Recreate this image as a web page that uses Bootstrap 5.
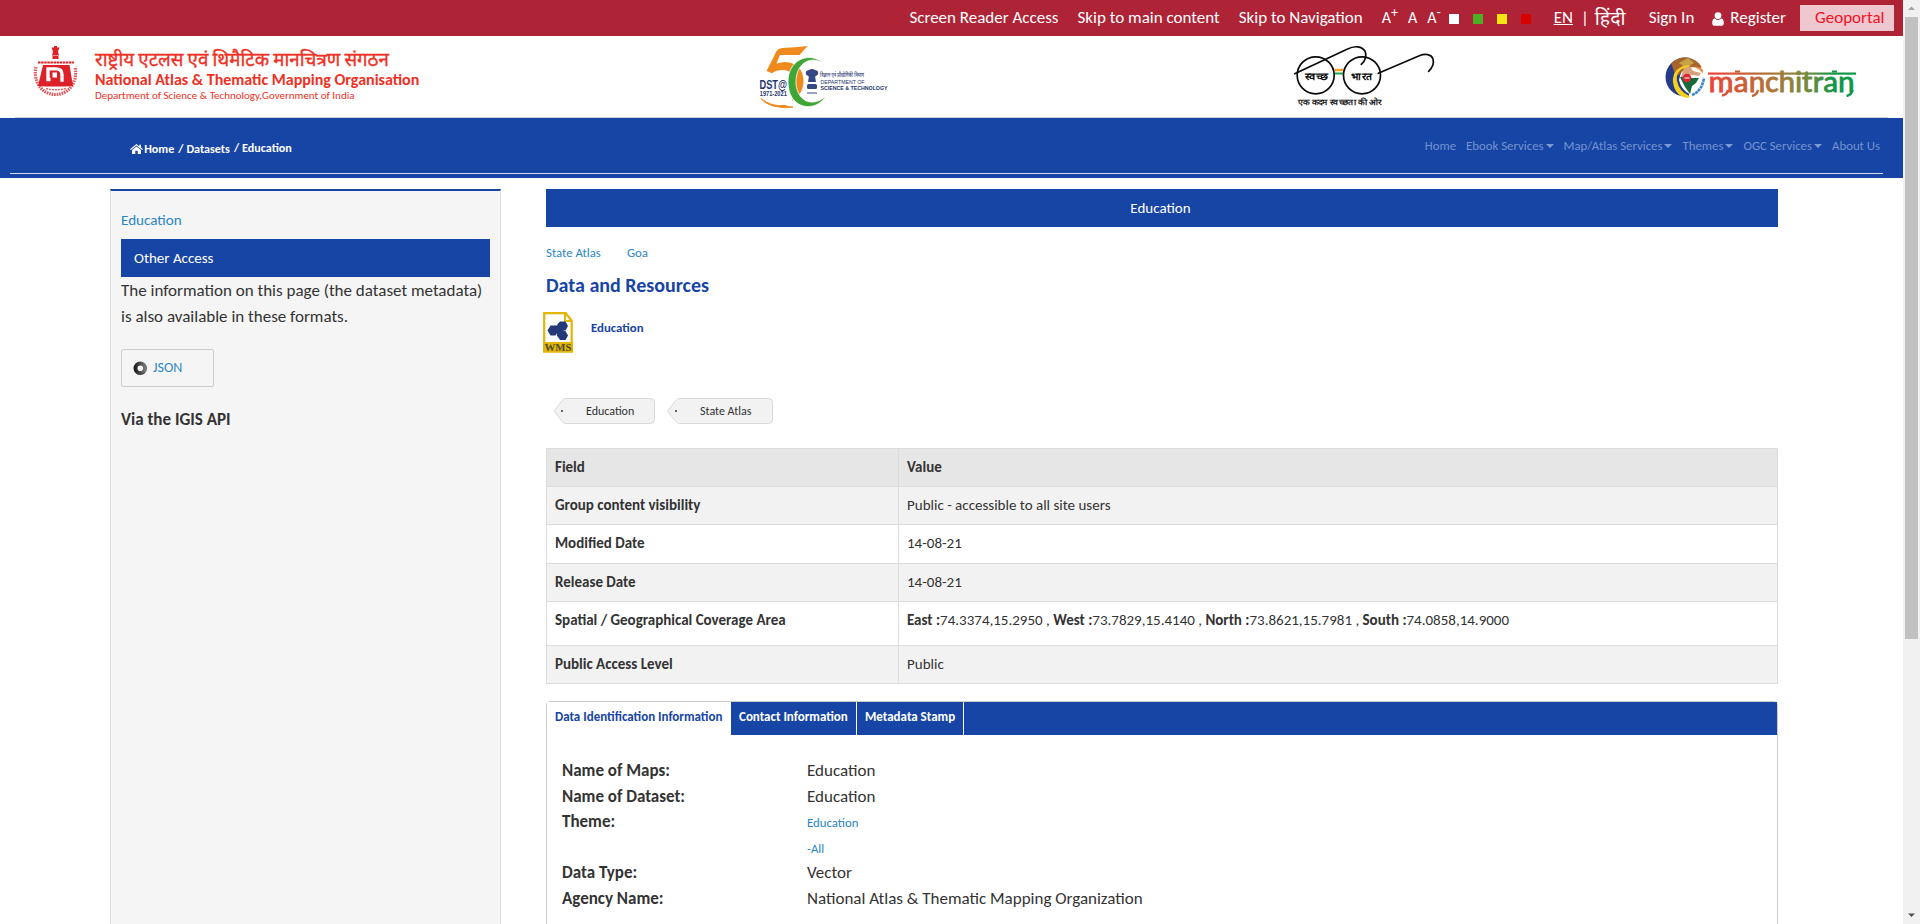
<!DOCTYPE html>
<html lang="en">
<head>
<meta charset="utf-8">
<title>Education | National Atlas &amp; Thematic Mapping Organisation</title>
<link rel="stylesheet" href="https://cdn.jsdelivr.net/npm/bootstrap@5.3.0/dist/css/bootstrap.min.css">
<style>
:root{--brand:#1745a5;--crimson:#ae2336;--sky:#2a85c7}
body{font-family:Carlito,Lato,"Noto Sans",sans-serif;color:#333;height:924px;overflow:hidden;background:#fff;font-size:17px;line-height:26px}
a{text-decoration:none}
.page-area{width:1903px;height:924px;overflow:hidden}
.top-bar{height:36px;background:var(--crimson);color:#fff;line-height:36px;padding-right:9px;white-space:nowrap}
.top-bar a{color:#fff}
.links a{margin-right:19px}
.sizes{font-size:16px;width:59px;margin-right:8px}
.sizes sup{font-size:14px;top:-6px;line-height:0}
.swatch{width:10px;height:10px;margin-right:14px;margin-top:2px}
.hindi{font-size:19.5px}
.geo{height:26px;width:94px;background:#efc7ce;line-height:26px;padding-left:15px}
.top-bar .geo{color:#f5101f}
.brand-row{height:82px;padding-left:32px}
.brand-row .rule{left:15px;right:15px;bottom:0;height:1px;background:#ccd3dc}
.org{width:661px;padding:14px 0 0 17px;color:#ee3124;white-space:nowrap}
.org-hi{font-size:18.7px;line-height:20px;-webkit-text-stroke:.35px #ee3124}
.org-en{font-size:16px;line-height:20px}
.org-dept{font-size:11px;line-height:12px}
.nav-band{height:60px;background:var(--brand);color:#fff;padding-top:10px;white-space:nowrap}
.nav-band .inner{height:46px;margin:0 20px 0 10px;border-bottom:1px solid #d5def0;padding-left:120px;padding-right:3px}
.crumbs{font-size:12.1px;font-weight:700;line-height:16px;padding-top:13px}
.crumbs a{color:#fff}
.menu{font-size:12.8px;line-height:16px;padding-top:10px}
.menu a{color:#7493d0;margin-left:10px}
.caret{display:inline-block;border:4px solid transparent;border-top-color:#7f9bd4;border-bottom:0;margin-left:2px;vertical-align:2px}
.side{width:391px;height:760px;margin-left:110px;background:#f5f5f5;border:1px solid #ddd;border-top:2px solid var(--brand);padding:16px 10px 0}
.side a,.content a{color:var(--sky)}
.side-link{font-size:15.100px;line-height:26px;height:32px}
.bar{height:38px;background:var(--brand);color:#fff;line-height:38px;font-size:15px}
.json-box{width:93px;height:38px;border:1px solid #ccc;border-radius:2px;margin-top:19px;padding-left:11px;font-size:14px}
.content{width:1232px;margin-left:45px}
.crumb-links{font-size:12.8px;line-height:20px;margin-top:16px}
.content h2{font-size:20px;line-height:26px;font-weight:700;color:var(--brand);margin:9px 0 0}
.resource{margin:14px 0 0 -3px;height:41px}
.resource a{font-size:12.8px;font-weight:700;color:var(--brand);margin-left:18px;line-height:32px}
.tags{margin:45px 0 0 8px;font-size:12px;line-height:26px;height:26px}
.content .tag-item{position:relative;height:26px;color:#333;padding-left:32px;white-space:nowrap}
.tag-item svg{position:absolute;left:0;top:0}
.tag-item span{position:relative}
.meta-table{font-size:15px;margin:24px 0 0;table-layout:fixed}
.meta-table>:not(caption)>*>*{padding:0 8px 2px;color:#333;vertical-align:middle;background:#fff;border:1px solid #dcdcdc;height:38px;box-shadow:none;line-height:20px}
.meta-table>tbody>tr:nth-child(odd)>*{background:#f2f2f2}
.meta-table>thead>tr>*{background:#e6e6e6}
.meta-table>tbody>tr.tall>*{height:44px;padding-bottom:8px}
.meta-table>tbody>tr.mid>*{height:39px}
.panel{border:1px solid #ccc;border-radius:4px 4px 0 0;margin-top:17px;height:240px}
.tabs{height:33px;background:var(--brand)}
.content .tabs a{color:#fff;font-weight:700;font-size:13px;padding-left:8px;line-height:30px;border-right:1px solid #fff;white-space:nowrap}
.content .tabs a.on{background:#fff;color:var(--brand)}
.info{margin:23px 0 0 15px}
.info dt,.info dd{margin:0;height:25.6px;line-height:25.6px}
.info dt{width:245px}
.info dd a{font-size:12.8px}
.track{width:17px;height:924px;background:#f1f1f1}
.thumb{width:13px;height:622px;background:#c1c1c1}
</style>
</head>
<body class="d-flex">
<div class="page-area flex-shrink-0">
<header>
  <div class="top-bar d-flex align-items-center justify-content-end">
    <div class="links"><a href="#">Screen Reader Access</a><a href="#">Skip to main content</a><a href="#">Skip to Navigation</a></div>
    <div class="sizes d-flex justify-content-between"><span>A<sup>+</sup></span><span>A</span><span>A<sup>-</sup></span></div>
    <div class="swatch" style="background:#fff"></div><div class="swatch" style="background:#4caf24"></div><div class="swatch" style="background:#f3e512"></div><div class="swatch" style="background:#d80000"></div>
    <a href="#" class="text-decoration-underline" style="margin-left:9px">EN</a><span style="padding:0 6px 0 8px">|</span><a href="#" class="hindi">हिंदी</a>
    <a href="#" style="margin-left:23px">Sign In</a>
    <svg width="12" height="14" viewBox="0 0 12 14" fill="#fff" style="margin:2px 6px 0 18px"><circle cx="6" cy="3.6" r="3.4"/><path d="M2.600 6.300C.8 7 .2 8.800.2 11c0 1.900.9 2.800 2.200 2.800h7.200c1.300 0 2.200-.9 2.200-2.800 0-2.200-.6-4-2.400-4.700C8.400 7.400 7.300 7.900 6 7.900s-2.400-.5-3.400-1.600z"/></svg>
    <a href="#">Register</a>
    <a href="#" class="geo" style="margin-left:14px">Geoportal</a>
  </div>
  <div class="brand-row position-relative d-flex">
    <div class="rule position-absolute"></div>
    <svg width="46" height="52" viewBox="0 0 46 52" style="margin-top:9px" fill="#dc2128">
      <path d="M19.500 2.500h8l-1.500 4 1 4h-7l1-4zM20.500 11h6v3h-6zM22 1h3v2h-3z"/>
      <path d="M6 17.500h36" stroke="#dc2128" stroke-width="2" stroke-dasharray="2.500 .6"/>
      <path d="M11 20h26.500L41 41c-10 .8-25 .8-35 0z"/>
      <path d="M18.500 34.500h-2.500V23.800h8q6 0 6 5.500v7.500" fill="none" stroke="#fff" stroke-width="3.300"/>
      <path d="M20.500 27.500v5h4.500v-5z" fill="#fff"/>
      <path d="M4 22C1 34 8 49.500 23.500 49.500S46 34 43 22" fill="none" stroke="#dc2128" stroke-width="3.200" stroke-dasharray="1.600 .9" opacity=".75"/>
      <path d="M14 43.500q10 2.500 20 0" fill="none" stroke="#dc2128" stroke-width="1.500" stroke-dasharray="2 1" opacity=".7"/>
    </svg>
    <div class="org"><div class="org-hi">राष्ट्रीय एटलस एवं थिमैटिक मानचित्रण संगठन</div><div class="org-en fw-bold">National Atlas &amp; Thematic Mapping Organisation</div><div class="org-dept">Department of Science &amp; Technology,Government of India</div></div>
    <svg width="136" height="66" viewBox="0 0 136 66" style="margin-top:8px;margin-left:17px">
      <path d="M20 8q2-3.500 6-4 13-.5 25.500-2-4 4.500-8 9H24l-3.500 8.500q9-3 16 0Q47 24 47.500 35.500q.5 14-11.500 21.500 4-8 3.500-17.500Q38 27 28 26q-7-.5-12 3.200L10.500 27q5-9.500 9.500-19z" fill="#f08a1d"/>
      <path d="M5 54.500q10 8.500 24 7 4 2 8 1.500-6 1.200-12 .3Q11 62 5 54.500z" fill="#f08a1d" stroke="#f08a1d"/>
      <rect x="2" y="34" width="29" height="19" fill="#fff"/>
      <path d="M66 19C57 8 32 13 32 38c0 27 27 32 38 14-12 11-28 7-30-12-1-20 14-29 26-21z" fill="#3fa535" stroke="#fff" stroke-width=".8"/>
      <text x="3.500" y="44.500" font-family="Liberation Sans" font-weight="700" font-size="12.800" textLength="27.500" lengthAdjust="spacingAndGlyphs" fill="#24356f">DST@</text>
      <text x="3.800" y="51.800" font-family="Liberation Sans" font-weight="700" font-size="6.500" textLength="27" lengthAdjust="spacingAndGlyphs" fill="#24356f">1971-2021</text>
      <g fill="#354886"><circle cx="56" cy="29.500" r="4.500"/><circle cx="52.500" cy="29" r="2.700"/><circle cx="59.500" cy="29" r="2.700"/><path d="M53 32h6l1 6h-8z"/><rect x="51" y="40" width="10" height="5" rx="1.500"/><path d="M51 49h10" stroke="#354886"/></g>
      <text x="64" y="32.500" font-size="5.800" font-weight="700" font-family="Lohit Devanagari,sans-serif" textLength="44" lengthAdjust="spacingAndGlyphs" fill="#3f4b82">विज्ञान एवं प्रौद्योगिकी विभाग</text>
      <text x="64.500" y="40" font-family="Liberation Sans" font-size="5.600" textLength="44" lengthAdjust="spacingAndGlyphs" fill="#24356f">DEPARTMENT OF</text>
      <text x="64.500" y="45.800" font-family="Liberation Sans" font-weight="700" font-size="5.600" textLength="67" lengthAdjust="spacingAndGlyphs" fill="#24356f">SCIENCE &amp; TECHNOLOGY</text>
    </svg>
    <svg width="150" height="68" viewBox="0 0 150 68" style="margin-top:6px;margin-left:398px" fill="none" stroke="#0b0b0b" stroke-width="1.700" stroke-linecap="round">
      <path d="M44.500 28h9" stroke="#f7a21b" stroke-linecap="butt" stroke-width="2.400"/><path d="M44.500 31.500h9" stroke="#1fa34a" stroke-linecap="butt" stroke-width="2"/>
      <circle cx="25.700" cy="33.300" r="18.500"/><circle cx="72" cy="33.300" r="18.500"/>
      <path d="M4.700 31.700 57 7.200c8-4 15-3 18 2 2 4 .5 9.500-3.700 13.200M88.300 31.300l41-17.500c6-2.500 12-1.500 13.600 3 1.300 4-.6 9-4.300 12.600"/>
      <g fill="#0b0b0b" stroke="none" font-weight="600" font-family="sans-serif"><text x="14.500" y="37.500" font-size="10" textLength="23.500" lengthAdjust="spacingAndGlyphs">स्वच्छ</text><text x="61" y="37.500" font-size="10" textLength="21" lengthAdjust="spacingAndGlyphs">भारत</text><text x="7.500" y="63" font-size="8.200" font-weight="400" stroke="#0b0b0b" stroke-width=".25" textLength="83.500" lengthAdjust="spacingAndGlyphs">एक कदम स्वच्छता की ओर</text></g>
    </svg>
    <svg width="196" height="50" viewBox="0 0 196 50" style="margin-top:18px;margin-left:225px">
      <defs><linearGradient id="mc" gradientUnits="userSpaceOnUse" x1="43" x2="191" y1="0" y2="0"><stop stop-color="#f04136"/><stop offset=".45" stop-color="#a97838"/><stop offset=".68" stop-color="#6f8c3e"/><stop offset=".85" stop-color="#159447"/><stop offset="1" stop-color="#099a46"/></linearGradient>
      <clipPath id="gl"><circle cx="20" cy="23" r="19.500"/></clipPath></defs>
      <g clip-path="url(#gl)"><path d="M0 0h24v46H0z" fill="#263b86"/><path d="M6 9Q16 0 30 4l8 8-8 6-10-2-9 7z" fill="#a8652b"/><path d="M14 9l9-5 6 5-8 5z" fill="#c9a245"/><path d="M24 14q8-4 14 2l-1 7-11-2z" fill="#ef7b2d"/></g>
      <path d="M24 12Q9 14 11 27q2 11 13 16-13-1-15-15Q8 14 24 12z" fill="#f7d21c" stroke="#f7d21c" stroke-width="2"/>
      <path d="M24 13q11-1 15 9-1 14-13 19-10-5-12-15 1-10 10-13z" fill="#fff"/>
      <path d="M15 23h8l4 1h7l-3 5-4 3-2 8-5-7z" fill="#176b3a"/><path d="M19 14l6-2 3 5 8 2-2 3-8-1-4 2h-6z" fill="#d9a27c"/><circle cx="22" cy="24" r="4.200" fill="#df2535"/><path d="M19.500 24h5" stroke="#fff" stroke-width="1"/>
      <path d="M27 41q10-4 12-17" fill="none" stroke="#3d86c6" stroke-width="2.600" stroke-dasharray="3 .6"/>
      <rect x="43" y="18.500" width="148" height="2.200" fill="url(#mc)"/>
      <text x="43.500" y="37.500" font-family="Carlito,Lato" font-size="31" stroke="url(#mc)" stroke-width=".9" textLength="146" lengthAdjust="spacingAndGlyphs" fill="url(#mc)">manchitran</text>
      <path d="M70 17.500h5M167 17.500h5" stroke="url(#mc)" stroke-width="2"/>
      <path d="M63 36q-1 5-6 5.500M93 36q-1 5-6 6M187.500 36q-1 5-6 6" fill="none" stroke="url(#mc)" stroke-width="2.500"/>
    </svg>
  </div>
  <nav class="nav-band">
    <div class="inner d-flex justify-content-between">
      <div class="crumbs d-flex"><a href="#"><svg width="13" height="10" viewBox="0 0 13 10" fill="#fff" style="margin:-3px -1.500px 0 0"><path d="M6.500 0 0 5.200l.8.9 5.700-4.500 5.700 4.500.8-.9-2-1.600V.7H9.300v1.500z"/><path d="M6.500 2.500 2 6v4h3.300V6.800h2.400V10H11V6z"/></svg> Home</a><span style="padding:0 3px 0 4px">/</span><a href="#">Datasets</a><span style="margin:-1px 3px 0 4px">/</span><a href="#" style="margin-top:-1px">Education</a></div>
      <div class="menu"><a href="#">Home</a><a href="#">Ebook Services<i class="caret"></i></a><a href="#">Map/Atlas Services<i class="caret"></i></a><a href="#">Themes<i class="caret"></i></a><a href="#">OGC Services<i class="caret"></i></a><a href="#">About Us</a></div>
    </div>
  </nav>
</header>
<main class="d-flex" style="padding-top:11px">
  <aside class="side flex-shrink-0">
    <div class="side-link"><a href="#">Education</a></div>
    <div class="bar" style="padding-left:13px">Other Access</div>
    <div style="padding-top:1px">The information on this page (the dataset metadata) is also available in these formats.</div>
    <div class="json-box d-flex align-items-center"><svg width="15" height="15" viewBox="0 0 15 15" style="margin-right:5px"><defs><linearGradient id="rg"><stop stop-color="#222"/><stop offset="1" stop-color="#777"/></linearGradient></defs><circle cx="7.300" cy="7.300" r="4.800" fill="#f5f5f5" stroke="url(#rg)" stroke-width="4"/><path d="M3 12q4 3 9-.5" stroke="#444" fill="none"/></svg><a href="#">JSON</a></div>
    <div class="fw-bold" style="margin-top:20px">Via the IGIS API</div>
  </aside>
  <section class="content flex-shrink-0">
    <div class="bar text-center" style="padding-right:3px">Education</div>
    <div class="crumb-links"><a href="#">State Atlas</a><a href="#" style="margin-left:26px">Goa</a></div>
    <h2>Data and Resources</h2>
    <div class="resource d-flex">
      <svg width="30" height="41" viewBox="0 0 30 41"><path d="M1.200 1.200h21.500l6 7.500V39.500H1.200z" fill="#fff" stroke="#e3b505" stroke-width="2.200"/><path d="M22 1v8h7" fill="none" stroke="#e3b505" stroke-width="2"/><rect y="30" width="30" height="10.500" fill="#e3b505"/><g fill="#25397a"><path d="M14.500 12 17 9.500h5.500L25 14l-2.500 4.500h-5L14 15zM7.500 13.500h5L15.500 18.500l-3 5h-5L4.500 18.500zM16.500 19h6L25 23.500 22.500 28h-5.500L14 23.500z"/><path d="M11.500 13.500h9v11h-6z"/></g><text x="1.500" y="38.500" font-family="Liberation Serif" font-weight="700" font-size="9.500" textLength="27" lengthAdjust="spacingAndGlyphs" fill="#4b4a35">WMS</text></svg>
      <a href="#">Education</a>
    </div>
    <div class="tags d-flex">
      <a href="#" class="tag-item" style="width:113px"><svg width="102" height="26"><path d="M10.500.5h86a4 4 0 0 1 4 4v17a4 4 0 0 1-4 4h-86Q8.500 25 .5 13 8.500.8 10.500.5z" fill="#f2f2f2" stroke="#d9d9d9"/><rect x="7" y="12" width="2" height="2" fill="#666"/></svg><span>Education</span></a>
      <a href="#" class="tag-item" style="width:107px;padding-left:33px"><svg width="107" height="26"><path d="M11.500.5h90a4 4 0 0 1 4 4v17a4 4 0 0 1-4 4h-90Q9.500 25 .5 13 9.500.8 11.500.5z" fill="#f2f2f2" stroke="#d9d9d9"/><rect x="8" y="12" width="2" height="2" fill="#666"/></svg><span>State Atlas</span></a>
    </div>
    <table class="table meta-table">
      <colgroup><col style="width:352px"><col></colgroup>
      <thead><tr><th>Field</th><th>Value</th></tr></thead>
      <tbody>
      <tr><th>Group content visibility</th><td>Public - accessible to all site users</td></tr>
      <tr class="mid"><th>Modified Date</th><td>14-08-21</td></tr>
      <tr><th>Release Date</th><td>14-08-21</td></tr>
      <tr class="tall"><th>Spatial / Geographical Coverage Area</th><td><b>East :</b>74.3374,15.2950 , <b>West :</b>73.7829,15.4140 , <b>North :</b>73.8621,15.7981 , <b>South :</b>74.0858,14.9000</td></tr>
      <tr><th>Public Access Level</th><td>Public</td></tr>
      </tbody>
    </table>
    <div class="panel">
      <div class="tabs d-flex"><a href="#" class="on" style="width:184px">Data Identification Information</a><a href="#" style="width:126px">Contact Information</a><a href="#" style="width:107px">Metadata Stamp</a></div>
      <div class="info">
        <dl class="d-flex m-0"><dt>Name of Maps:</dt><dd>Education</dd></dl>
        <dl class="d-flex m-0"><dt>Name of Dataset:</dt><dd>Education</dd></dl>
        <dl class="d-flex m-0"><dt>Theme:</dt><dd><a href="#">Education</a></dd></dl>
        <dl class="d-flex m-0"><dt></dt><dd><a href="#">-All</a></dd></dl>
        <dl class="d-flex m-0"><dt>Data Type:</dt><dd>Vector</dd></dl>
        <dl class="d-flex m-0"><dt>Agency Name:</dt><dd>National Atlas &amp; Thematic Mapping Organization</dd></dl>
      </div>
    </div>
  </section>
</main>
</div>
<div class="track d-flex flex-column align-items-center">
  <svg width="17" height="17" viewBox="0 0 17 17"><path d="M5 10h7L8.500 6.500z" fill="#a3a3a3"/></svg>
  <div class="thumb"></div>
  <svg class="mt-auto" width="17" height="17" viewBox="0 0 17 17"><path d="M5 6.500h7L8.500 10z" fill="#505050"/></svg>
</div>
<script src="https://cdn.jsdelivr.net/npm/bootstrap@5.3.0/dist/js/bootstrap.bundle.min.js"></script>
</body>
</html>
